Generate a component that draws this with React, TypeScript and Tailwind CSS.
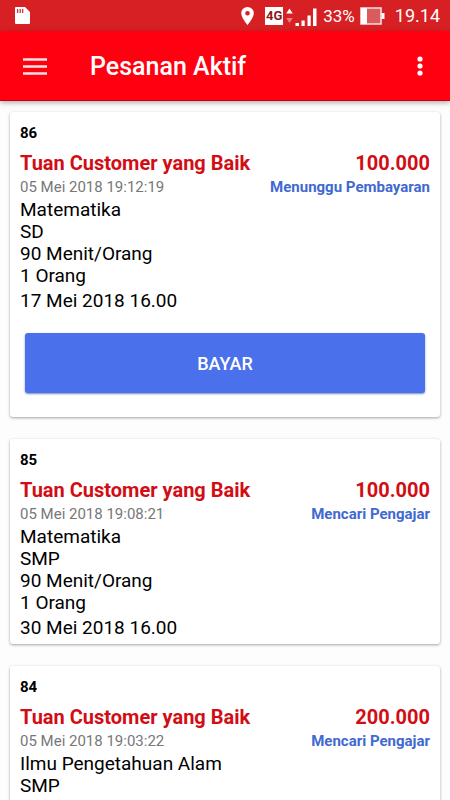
type Order = {
  id: number;
  customer: string;
  price: string;
  createdAt: string;
  status: string;
  details: string[];
  schedule?: string;
  payable?: boolean;
};

const orders: Order[] = [
  {
    id: 86,
    customer: 'Tuan Customer yang Baik',
    price: '100.000',
    createdAt: '05 Mei 2018 19:12:19',
    status: 'Menunggu Pembayaran',
    details: ['Matematika', 'SD', '90 Menit/Orang', '1 Orang'],
    schedule: '17 Mei 2018 16.00',
    payable: true,
  },
  {
    id: 85,
    customer: 'Tuan Customer yang Baik',
    price: '100.000',
    createdAt: '05 Mei 2018 19:08:21',
    status: 'Mencari Pengajar',
    details: ['Matematika', 'SMP', '90 Menit/Orang', '1 Orang'],
    schedule: '30 Mei 2018 16.00',
  },
  {
    id: 84,
    customer: 'Tuan Customer yang Baik',
    price: '200.000',
    createdAt: '05 Mei 2018 19:03:22',
    status: 'Mencari Pengajar',
    details: ['Ilmu Pengetahuan Alam', 'SMP'],
  },
];

function StatusBar() {
  return (
    <div className="flex h-[31px] shrink-0 items-center bg-[#d62024] pr-[10px] pl-[15px] text-white">
      <svg className="h-[17px] w-[15px]" viewBox="0 0 15 17" aria-hidden="true">
        <path d="M1 0h9l5 5v11a1 1 0 0 1-1 1H1a1 1 0 0 1-1-1V1a1 1 0 0 1 1-1z" fill="#fff" />
        <path d="M2.7 2v4M5.2 2v4M7.7 2v4" stroke="#d62024" strokeWidth="1.2" />
      </svg>
      <div className="ml-auto flex items-center">
        <svg className="h-[18px] w-[13px]" viewBox="0 0 13 18" aria-hidden="true">
          <path
            d="M6.5 0A6.3 6.3 0 0 0 .2 6.3C.2 11 6.5 18 6.5 18s6.3-7 6.3-11.7A6.3 6.3 0 0 0 6.5 0zm0 8.6a2.3 2.3 0 1 1 0-4.6 2.3 2.3 0 0 1 0 4.6z"
            fill="#fff"
          />
        </svg>
        <span className="ml-[11px] flex h-[18px] w-[18px] items-center justify-center bg-white text-[13px] leading-[18px] font-bold text-[#8a1a1d]">
          4G
        </span>
        <svg className="ml-[3px] h-[20px] w-[31px]" viewBox="0 0 31 20" aria-hidden="true">
          <path d="M3.5 2.5 6.8 7.5H.2z" fill="#fff" />
          <path d="M3.5 17 .2 12h6.6z" fill="#e87c7e" />
          <path d="M9.500 17h3.500v3h-3.500zM15.500 14.500h3.200v5.500h-3.200zM21.500 9.500h3.200v10.500h-3.200zM27 2.500h3.500v17.500H27z" fill="#fff" />
        </svg>
        <span className="ml-[6px] text-[17px] leading-[20px]">33%</span>
        <svg className="ml-[5px] h-[18px] w-[25px]" viewBox="0 0 25 18" aria-hidden="true">
          <path d="M1 1h20v16H1z" fill="#d95b5e" stroke="#f9dede" strokeWidth="1.600" />
          <path d="M1 1h6v16H1z" fill="#fff" />
          <path d="M21.500 6H24.500v6h-3z" fill="#fff" />
        </svg>
        <span className="ml-[10px] text-[18px] leading-[20px]">19.14</span>
      </div>
    </div>
  );
}

function AppBar() {
  return (
    <header className="z-10 flex h-[70px] shrink-0 items-center border-b border-[#c8000c] bg-[#ff0011] pr-[15px] pl-[23px] text-white shadow-[0_2px_5px_rgba(0,0,0,0.3)]">
      <button type="button" aria-label="Menu">
        <svg className="h-[20px] w-[24px]" viewBox="0 0 24 20" aria-hidden="true">
          <path d="M0 3.500h24M0 10.500h24M0 17.500h24" stroke="#ffe3e3" strokeWidth="2.400" />
        </svg>
      </button>
      <h1 className="ml-[43px] pt-[3px] text-[25px] leading-[30px] font-medium">Pesanan Aktif</h1>
      <button type="button" aria-label="Opsi lainnya" className="ml-auto flex w-[30px] justify-center">
        <svg className="h-[20px] w-[6px]" viewBox="0 0 6 20" aria-hidden="true">
          <circle cx="3" cy="3" r="2.600" fill="#fff" />
          <circle cx="3" cy="10" r="2.600" fill="#fff" />
          <circle cx="3" cy="17" r="2.600" fill="#fff" />
        </svg>
      </button>
    </header>
  );
}

function OrderCard({ order }: { order: Order }) {
  return (
    <article className="rounded-[3px] bg-white px-[10px] pt-[10px] pb-[5px] text-black shadow-[0_1px_3px_rgba(0,0,0,0.36)]">
      <p className="text-[15px] leading-[22px] font-bold">{order.id}</p>
      <div className="mt-[7px] flex items-center justify-between text-[20px] leading-[24px] font-bold text-[#d20d15]">
        <h2>{order.customer}</h2>
        <span>{order.price}</span>
      </div>
      <div className="flex items-center justify-between text-[15px] leading-[24px]">
        <span className="text-[#777777]">{order.createdAt}</span>
        <span className="font-bold text-[#4169d0]">{order.status}</span>
      </div>
      <div className="text-[19px] leading-[22px]">
        {order.details.map((line) => (
          <p key={line}>{line}</p>
        ))}
        {order.schedule && <p className="mt-[3px]">{order.schedule}</p>}
      </div>
      {order.payable && (
        <div className="px-[5px] pt-[21px] pb-[19px]">
          <button
            type="button"
            className="block h-[60px] w-full rounded-[3px] bg-[#4a70eb] pt-[2px] text-[18px] leading-[24px] font-medium text-white shadow-[0_1px_2px_rgba(30,60,160,0.6)]"
          >
            BAYAR
          </button>
        </div>
      )}
    </article>
  );
}

export default function App() {
  return (
    <div className="flex h-screen flex-col overflow-hidden bg-[#fdfdfd] font-[Roboto,sans-serif]">
      <StatusBar />
      <AppBar />
      <main className="flex min-h-0 flex-1 flex-col gap-[22px] overflow-hidden px-[10px] pt-[11px] [&>*]:shrink-0">
        {orders.map((order) => (
          <OrderCard key={order.id} order={order} />
        ))}
      </main>
    </div>
  );
}
